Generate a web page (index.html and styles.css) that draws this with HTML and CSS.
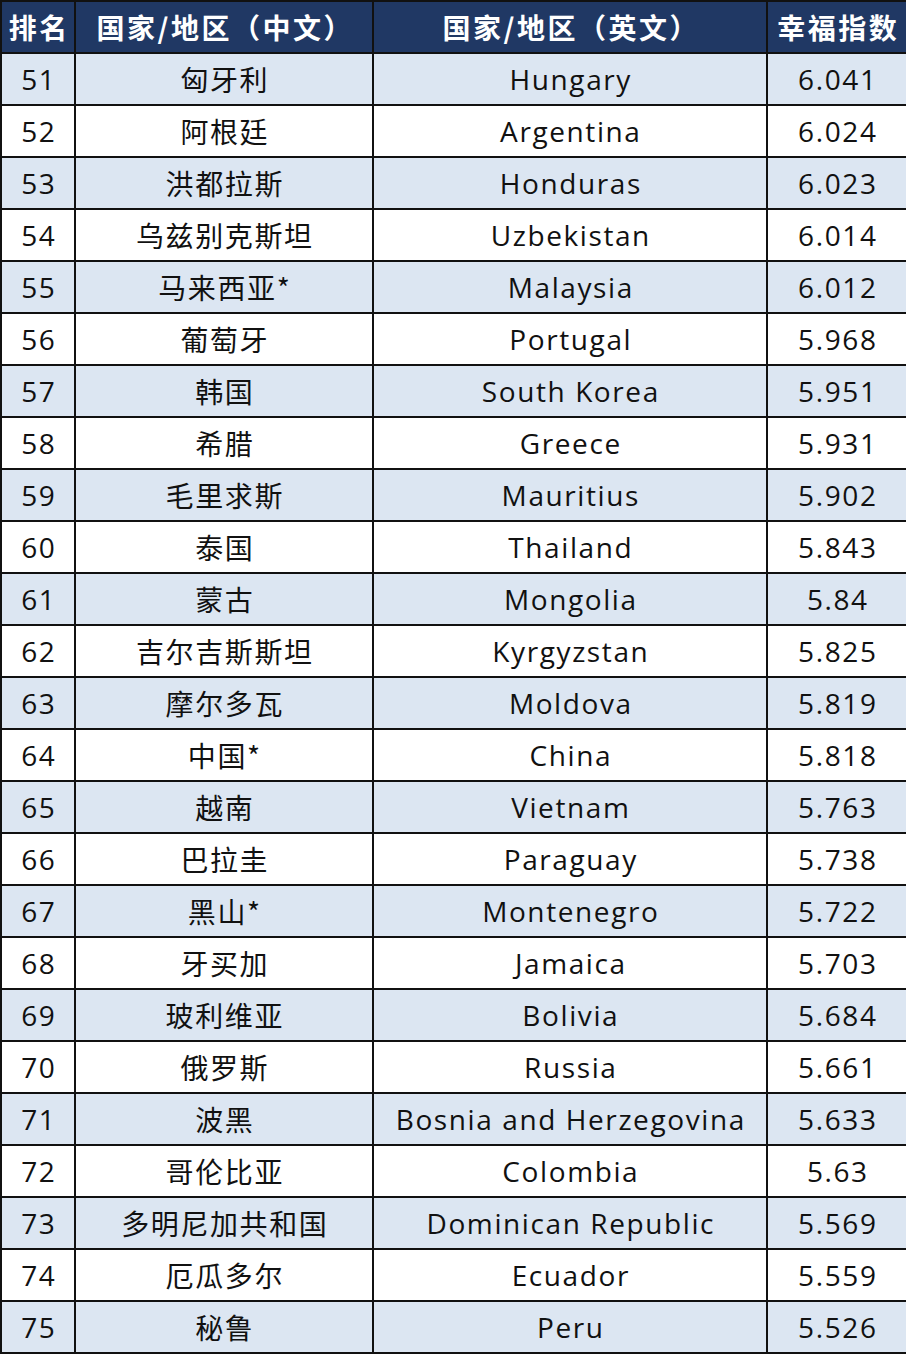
FILE: index.html
```html
<!DOCTYPE html>
<html lang="zh-CN">
<head>
<meta charset="utf-8">
<title>幸福指数 51-75</title>
<link rel="stylesheet" href="styles.css">
</head>
<body>
<table class="rank-table">
  <colgroup>
    <col class="c-rank"><col class="c-zh"><col class="c-en"><col class="c-score">
  </colgroup>
  <thead>
    <tr><th>排名</th><th>国家/地区（中文）</th><th>国家/地区（英文）</th><th>幸福指数</th></tr>
  </thead>
  <tbody>
    <tr class="alt"><td>51</td><td class="zh">匈牙利</td><td>Hungary</td><td>6.041</td></tr>
    <tr><td>52</td><td class="zh">阿根廷</td><td>Argentina</td><td>6.024</td></tr>
    <tr class="alt"><td>53</td><td class="zh">洪都拉斯</td><td>Honduras</td><td>6.023</td></tr>
    <tr><td>54</td><td class="zh">乌兹别克斯坦</td><td>Uzbekistan</td><td>6.014</td></tr>
    <tr class="alt"><td>55</td><td class="zh">马来西亚*</td><td>Malaysia</td><td>6.012</td></tr>
    <tr><td>56</td><td class="zh">葡萄牙</td><td>Portugal</td><td>5.968</td></tr>
    <tr class="alt"><td>57</td><td class="zh">韩国</td><td>South Korea</td><td>5.951</td></tr>
    <tr><td>58</td><td class="zh">希腊</td><td>Greece</td><td>5.931</td></tr>
    <tr class="alt"><td>59</td><td class="zh">毛里求斯</td><td>Mauritius</td><td>5.902</td></tr>
    <tr><td>60</td><td class="zh">泰国</td><td>Thailand</td><td>5.843</td></tr>
    <tr class="alt"><td>61</td><td class="zh">蒙古</td><td>Mongolia</td><td>5.84</td></tr>
    <tr><td>62</td><td class="zh">吉尔吉斯斯坦</td><td>Kyrgyzstan</td><td>5.825</td></tr>
    <tr class="alt"><td>63</td><td class="zh">摩尔多瓦</td><td>Moldova</td><td>5.819</td></tr>
    <tr><td>64</td><td class="zh">中国*</td><td>China</td><td>5.818</td></tr>
    <tr class="alt"><td>65</td><td class="zh">越南</td><td>Vietnam</td><td>5.763</td></tr>
    <tr><td>66</td><td class="zh">巴拉圭</td><td>Paraguay</td><td>5.738</td></tr>
    <tr class="alt"><td>67</td><td class="zh">黑山*</td><td>Montenegro</td><td>5.722</td></tr>
    <tr><td>68</td><td class="zh">牙买加</td><td>Jamaica</td><td>5.703</td></tr>
    <tr class="alt"><td>69</td><td class="zh">玻利维亚</td><td>Bolivia</td><td>5.684</td></tr>
    <tr><td>70</td><td class="zh">俄罗斯</td><td>Russia</td><td>5.661</td></tr>
    <tr class="alt"><td>71</td><td class="zh">波黑</td><td>Bosnia and Herzegovina</td><td>5.633</td></tr>
    <tr><td>72</td><td class="zh">哥伦比亚</td><td>Colombia</td><td>5.63</td></tr>
    <tr class="alt"><td>73</td><td class="zh">多明尼加共和国</td><td>Dominican Republic</td><td>5.569</td></tr>
    <tr><td>74</td><td class="zh">厄瓜多尔</td><td>Ecuador</td><td>5.559</td></tr>
    <tr class="alt"><td>75</td><td class="zh">秘鲁</td><td>Peru</td><td>5.526</td></tr>
  </tbody>
</table>
</body>
</html>
```

FILE: styles.css
```css
html, body {
  margin: 0;
  padding: 0;
  background: #ffffff;
}

.rank-table {
  width: 906px;
  border-collapse: collapse;
  table-layout: fixed;
  font-family: "Open Sans", "Noto Sans CJK SC", sans-serif;
  font-size: 28px;
  color: #111111;
}

.c-rank { width: 74px; }
.c-zh { width: 298px; }
.c-en { width: 394px; }
.c-score { width: 140px; }

.rank-table th,
.rank-table td {
  border: 2px solid #111111;
  height: 50px;
  padding: 0;
  text-align: center;
  vertical-align: middle;
  line-height: 1;
  white-space: nowrap;
}

.rank-table td {
  background: #ffffff;
  letter-spacing: 1.6px;
  padding-left: 1.6px;
}

.rank-table th {
  background: #203864;
  color: #ffffff;
  font-family: "Noto Sans CJK SC", sans-serif;
  font-weight: 700;
  font-size: 28px;
  letter-spacing: 2.5px;
  padding-left: 2.5px;
}

.rank-table tr.alt td {
  background: #dce6f2;
}

.rank-table td.zh {
  font-family: "Noto Sans CJK SC", sans-serif;
  font-size: 28px;
}
```
